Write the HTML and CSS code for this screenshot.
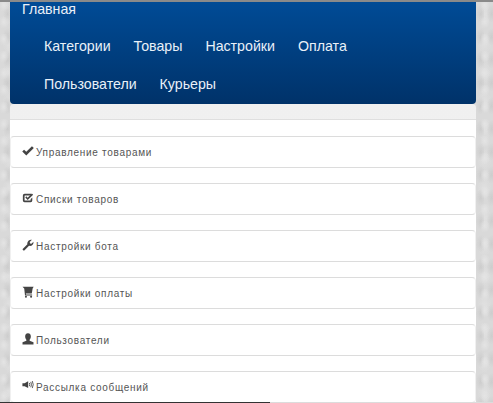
FILE: index.html
```html
<!DOCTYPE html>
<html lang="ru">
<head>
  <meta charset="UTF-8">
  <title>Панель управления</title>
  <link rel="stylesheet" href="styles.css">
</head>
<body>

<div class="container">
  <div class="navbar">
    <a class="brand" href="#">Главная</a>
    <ul class="nav">
      <li><a href="#">Категории</a></li>
      <li><a href="#">Товары</a></li>
      <li><a href="#">Настройки</a></li>
      <li><a href="#">Оплата</a></li>
      <li><a href="#">Пользователи</a></li>
      <li><a href="#">Курьеры</a></li>
    </ul>
  </div>

  <div class="well">
    <div class="menu">
      <a class="item" href="#">
        <svg class="icon" viewBox="0 0 14 14"><path d="M0.3 7.6 L2.4 5.4 L5 7.8 L11.6 1.4 L13.8 3.6 L5 12.2 Z"/></svg>
        Управление товарами
      </a>
      <a class="item" href="#">
        <svg class="icon" viewBox="0 0 14 14"><path d="M3 2 H10.5 V4 H3.5 Q3 4 3 4.5 V9.5 Q3 10 3.5 10 H9.5 Q10 10 10 9.5 V8.5 L12 6.5 V10 Q12 12 10 12 H3 Q1 12 1 10 V4 Q1 2 3 2 Z"/><path d="M3.8 6.3 L5 5 L6.6 6.6 L11.5 1.8 L13 3.1 L6.6 9.4 Z"/></svg>
        Списки товаров
      </a>
      <a class="item" href="#">
        <svg class="icon" viewBox="0 0 14 14"><path d="M0.8 11.6 L6.3 6.2 C5.8 4 7.3 1 10.4 0.8 L11.6 1 L9 3.6 L9.4 5.2 L11 5.6 L13.4 3.2 C13.8 6.4 11 8.8 8.2 8 L3 13.2 Q2.2 13.8 1.3 13.1 Q0.4 12.3 0.8 11.6 Z"/></svg>
        Настройки бота
      </a>
      <a class="item" href="#">
        <svg class="icon" viewBox="0 0 14 14"><path d="M0.6 1 H13.6 L12.4 3 L11.4 8.8 H4.5 L4.8 10 H11.8 V11.2 H3.5 L2.6 3 Z"/><circle cx="4.6" cy="12.6" r="1.2"/><circle cx="10.6" cy="12.6" r="1.2"/></svg>
        Настройки оплаты
      </a>
      <a class="item" href="#">
        <svg class="icon" viewBox="0 0 14 14"><path d="M7 0.4 C9.4 0.4 10.5 2.4 10.3 4.4 C10.2 6 9.5 7.2 8.9 8 V9 L13.4 10.8 V13.4 H0.6 V10.8 L5.1 9 V8 C4.5 7.2 3.8 6 3.7 4.4 C3.5 2.4 4.6 0.4 7 0.4 Z"/></svg>
        Пользователи
      </a>
      <a class="item" href="#">
        <svg class="icon icon-up" viewBox="0 0 14 14"><path d="M0.5 5 H3 L7.2 2.6 V10.4 L3 8.4 H0.5 Z"/><path class="wave" d="M8.6 4.6 Q9.6 6.5 8.6 8.4 M10.2 3.4 Q12 6.5 10.2 9.6 M12 2.4 Q14.2 6.5 12 10.6"/></svg>
        Рассылка сообщений
      </a>
    </div>
  </div>
</div>

<div class="taskline"></div>

</body>
</html>
```

FILE: styles.css
```css
html, body {
  height: 100%;
}

body {
  margin: 0;
  overflow: hidden;
  background-color: #d9d9d9;
  background-image:
    radial-gradient(ellipse at 30% 30%, #e4e4e4 0, rgba(228, 228, 228, 0) 5px),
    radial-gradient(ellipse at 70% 60%, #cdcdcd 0, rgba(205, 205, 205, 0) 5px),
    radial-gradient(ellipse at 50% 50%, #e0e0e0 0, rgba(224, 224, 224, 0) 7px);
  background-size: 13px 17px, 11px 23px, 19px 29px;
  border-top: 2px solid #8a8a8a;
  box-sizing: border-box;
  font-family: 'Liberation Sans', Arial, sans-serif;
}

.container {
  margin: 0 17px 0 10px;
}

.navbar {
  height: 102px;
  box-sizing: border-box;
  border-radius: 0 0 4px 4px;
  background: linear-gradient(to bottom, #004b96, #003269);
}

.navbar a {
  color: #e9f0f8;
  font-size: 14.2px;
  line-height: 20px;
  text-decoration: none;
}

.brand {
  display: block;
  height: 23px;
  padding-left: 12px;
  position: relative;
  top: -3px;
}

.nav {
  display: flex;
  flex-wrap: wrap;
  list-style: none;
  margin: 0;
  padding: 0 34px;
  column-gap: 23px;
}

.nav li {
  height: 38px;
  padding-top: 11px;
  box-sizing: border-box;
}

.well {
  padding-top: 15px;
  background: linear-gradient(to bottom, #f0f0f0, #f7f7f7);
  border-radius: 4px 4px 0 0;
}

.menu {
  background: #fff;
  border-top: 1px solid #dfdfdf;
  padding-top: 16px;
  display: flex;
  flex-direction: column;
  gap: 15px;
  height: 400px;
}

.item {
  display: flex;
  align-items: center;
  flex: none;
  height: 32px;
  box-sizing: border-box;
  padding-left: 11px;
  gap: 2px;
  background: #fff;
  border: 1px solid #dcdcdc;
  border-left-color: #f0f0f0;
  border-right-color: #f0f0f0;
  border-radius: 4px;
  color: #555;
  font-size: 10px;
  letter-spacing: 0.7px;
  text-decoration: none;
}

.icon {
  width: 12px;
  height: 12px;
  fill: #444;
  flex: none;
  margin-top: -2px;
}

.icon-up {
  margin-top: -4px;
}

.icon .wave {
  fill: none;
  stroke: #444;
  stroke-width: 1;
}

.taskline {
  position: fixed;
  left: 0;
  bottom: 0;
  width: 100%;
  height: 1px;
  background: linear-gradient(to right, #333 270px, #dcdcdc 270px);
}
```
